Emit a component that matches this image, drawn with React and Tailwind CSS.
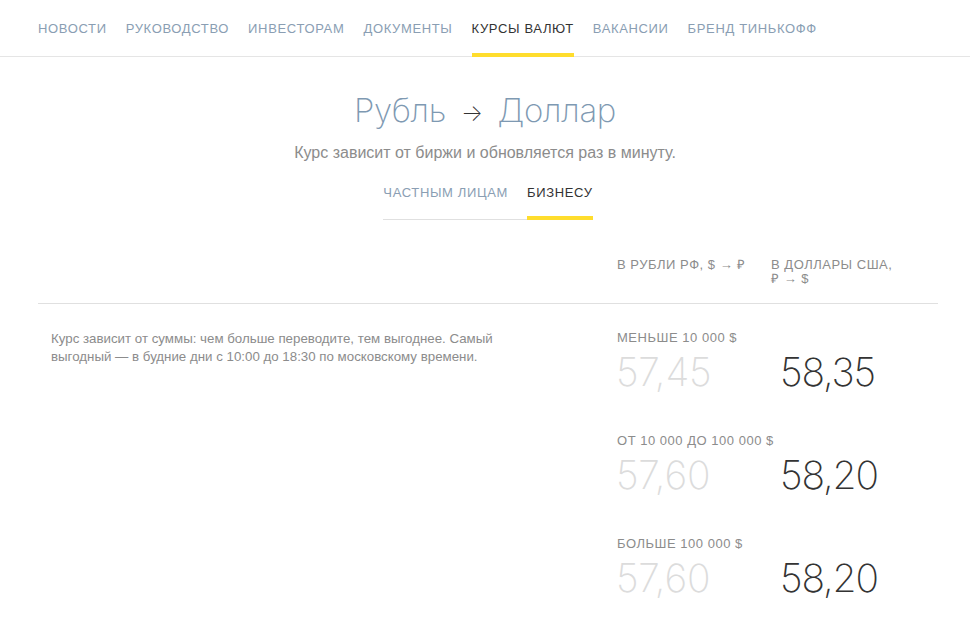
const navItems = ["Новости", "Руководство", "Инвесторам", "Документы", "Курсы валют", "Вакансии", "Бренд Тинькофф"];

const rows = [
  { label: "Меньше 10 000 $", buy: "57,45", sell: "58,35" },
  { label: "От 10 000 до 100 000 $", buy: "57,60", sell: "58,20" },
  { label: "Больше 100 000 $", buy: "57,60", sell: "58,20" },
];

export default function App() {
  return (
    <div className="w-[970px] h-[621px] overflow-hidden bg-white font-['Liberation_Sans',Arial,sans-serif]">
      {/* top nav */}
      <nav className="flex gap-[19px] px-[38px] border-b border-[#e5e5e5] h-[57px]">
        {navItems.map((item) => {
          const active = item === "Курсы валют";
          return (
            <a
              key={item}
              className={
                "flex items-center pt-[5px] uppercase text-[13px] tracking-[0.05em] border-b-[4px] -mb-px " +
                (active ? "text-[#333] border-[#ffdd2d]" : "text-[#8a9eb3] border-transparent")
              }
            >
              {item}
            </a>
          );
        })}
      </nav>

      {/* heading */}
      <div className="flex flex-col items-center pt-[31px]">
        <h1 className="text-[33px] font-extralight leading-[44px] text-[#7e99b2] font-['Inter',sans-serif] tracking-[-0.01em]">
          Рубль <span className="text-[#333] text-[23px] align-middle mx-[6px]">→</span> Доллар
        </h1>
        <p className="mt-[6px] text-[16px] text-[#8c8c8c]">Курс зависит от биржи и обновляется раз в минуту.</p>
        <div className="mt-[18px] ml-[6px] flex border-b border-[#e0e0e0]">
          <div className="pb-[16px] pr-[19px] text-[13px] uppercase tracking-[0.05em] text-[#8a9eb3]">Частным лицам</div>
          <div className="pb-[13px] text-[13px] uppercase tracking-[0.05em] text-[#333] border-b-[4px] border-[#ffdd2d] -mb-px">Бизнесу</div>
        </div>
      </div>

      {/* table header */}
      <div className="ml-[38px] mr-[32px] mt-[38px] flex border-b border-[#e0e0e0] pb-[17px]">
        <div className="flex-1" />
        <div className="w-[154px] text-[13px] uppercase tracking-[0.04em] text-[#8c8c8c] leading-[14px]">В рубли РФ, $ → ₽</div>
        <div className="w-[167px] text-[13px] uppercase tracking-[0.04em] text-[#8c8c8c] leading-[14px]">
          В доллары США,
          <br />₽ → $
        </div>
      </div>

      {/* body */}
      <div className="ml-[38px] mr-[32px] flex pt-[27px]">
        <div className="flex-1 pl-[13px] pr-[40px] text-[13.3px] leading-[18px] text-[#8c8c8c]">
          <p className="w-[460px] -mt-[1px]">
            Курс зависит от суммы: чем больше переводите, тем выгоднее. Самый выгодный — в будние дни с 10:00 до 18:30 по московскому времени.
          </p>
        </div>
        <div className="w-[321px] flex flex-col gap-[39px]">
          {rows.map((r) => (
            <div key={r.label}>
              <div className="text-[13px] uppercase tracking-[0.04em] text-[#8c8c8c] leading-[14px]">{r.label}</div>
              <div className="flex mt-[4px] font-['Inter',sans-serif] font-extralight text-[39px] leading-[46px]">
                <div className="w-[164px] -ml-[1px] text-[#dcdcdc] tracking-[-0.005em]">{r.buy}</div>
                <div className="text-[#333] tracking-[-0.03em]">{r.sell}</div>
              </div>
            </div>
          ))}
        </div>
      </div>
    </div>
  );
}
